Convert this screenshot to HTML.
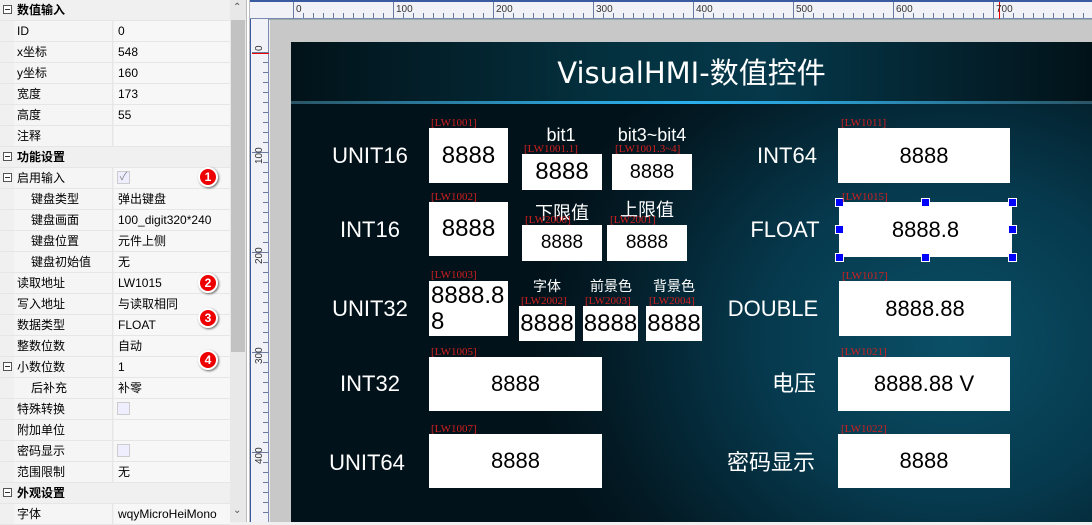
<!DOCTYPE html>
<html><head><meta charset="utf-8"><style>
*{margin:0;padding:0;box-sizing:border-box}
body{width:1092px;height:522px;overflow:hidden;position:relative;background:#f0f0f0;font-family:"Liberation Sans","Noto Sans CJK SC",sans-serif;font-size:12px;color:#000}
.a{position:absolute}
.row{position:absolute;left:0;width:230px;height:21px;border-bottom:1px solid #e6e6e6}
.row .n{position:absolute;left:14px;width:99px;height:20px;line-height:20px;padding-left:3px;background:#f5f5f5;border-right:1px solid #e6e6e6}
.row .v{position:absolute;left:114px;width:116px;height:20px;line-height:20px;padding-left:4px;background:#f7f7f7}
.row.h .n{font-weight:bold;background:#f0f0f0;border:none;width:216px}
.row .i{position:absolute;left:3px;top:5px;width:9px;height:9px;border:1px solid #555;background:#fff}
.row .i:after{content:"";position:absolute;left:1px;top:3px;width:5px;height:1px;background:#333}
.sub{padding-left:17px!important}
.cb{position:absolute;left:3px;top:3px;width:13px;height:13px;border:1px solid #ccc;background:#eef}
.badge{position:absolute;left:198px;width:20px;height:20px;border-radius:50%;background:#e00;border:2px solid #fff;box-shadow:1px 1px 2px #666;color:#fff;font-weight:bold;font-size:12px;text-align:center;line-height:16px}
.box{position:absolute;background:#fff;color:#000;font-size:24px;text-align:center;font-family:"Liberation Sans","Noto Sans CJK SC",sans-serif}
.tag{position:absolute;color:#d02020;font-family:"Liberation Serif",serif;font-size:11px;line-height:11px}
.lbl{position:absolute;color:#fff;font-size:22px;text-align:center;line-height:26px}
.sl{position:absolute;color:#fff;font-size:16px;text-align:center;line-height:18px}
.hd{position:absolute;width:9px;height:9px;background:#00f;border:1px solid #fff}
</style></head><body>
<!-- property grid -->
<div class="row h" style="top:0"><div class="i"></div><div class="n">数值输入</div></div>
<div class="row" style="top:21px"><div class="n">ID</div><div class="v">0</div></div>
<div class="row" style="top:42px"><div class="n">x坐标</div><div class="v">548</div></div>
<div class="row" style="top:63px"><div class="n">y坐标</div><div class="v">160</div></div>
<div class="row" style="top:84px"><div class="n">宽度</div><div class="v">173</div></div>
<div class="row" style="top:105px"><div class="n">高度</div><div class="v">55</div></div>
<div class="row" style="top:126px"><div class="n">注释</div><div class="v"></div></div>
<div class="row h" style="top:147px"><div class="i"></div><div class="n">功能设置</div></div>
<div class="row" style="top:168px"><div class="i"></div><div class="n">启用输入</div><div class="v"><div class="cb" style="color:#888;font-size:11px;line-height:11px;text-align:center">✓</div></div></div>
<div class="row" style="top:189px"><div class="n sub">键盘类型</div><div class="v">弹出键盘</div></div>
<div class="row" style="top:210px"><div class="n sub">键盘画面</div><div class="v">100_digit320*240</div></div>
<div class="row" style="top:231px"><div class="n sub">键盘位置</div><div class="v">元件上侧</div></div>
<div class="row" style="top:252px"><div class="n sub">键盘初始值</div><div class="v">无</div></div>
<div class="row" style="top:273px"><div class="n">读取地址</div><div class="v">LW1015</div></div>
<div class="row" style="top:294px"><div class="n">写入地址</div><div class="v">与读取相同</div></div>
<div class="row" style="top:315px"><div class="n">数据类型</div><div class="v">FLOAT</div></div>
<div class="row" style="top:336px"><div class="n">整数位数</div><div class="v">自动</div></div>
<div class="row" style="top:357px"><div class="i"></div><div class="n">小数位数</div><div class="v">1</div></div>
<div class="row" style="top:378px"><div class="n sub">后补充</div><div class="v">补零</div></div>
<div class="row" style="top:399px"><div class="n">特殊转换</div><div class="v"><div class="cb"></div></div></div>
<div class="row" style="top:420px"><div class="n">附加单位</div><div class="v"></div></div>
<div class="row" style="top:441px"><div class="n">密码显示</div><div class="v"><div class="cb"></div></div></div>
<div class="row" style="top:462px"><div class="n">范围限制</div><div class="v">无</div></div>
<div class="row h" style="top:483px"><div class="i"></div><div class="n">外观设置</div></div>
<div class="row" style="top:504px"><div class="n">字体</div><div class="v">wqyMicroHeiMono</div></div>
<div class="badge" style="top:167px">1</div>
<div class="badge" style="top:273px">2</div>
<div class="badge" style="top:308px">3</div>
<div class="badge" style="top:350px">4</div>
<!-- scrollbar -->
<div class="a" style="left:230px;top:0;width:16px;height:522px;background:#e8e8e8"></div>
<div class="a" style="left:231px;top:20px;width:14px;height:332px;background:#c2c2c2"></div>
<div class="a" style="left:233px;top:2px;font-size:10px;color:#555">⌃</div>
<div class="a" style="left:233px;top:505px;font-size:10px;color:#555">⌄</div>
<div class="a" style="left:246px;top:0;width:4px;height:522px;background:#fff;border-left:1px solid #bbb;border-right:1px solid #bbb"></div>
<!-- rulers -->
<div class="a" style="left:250px;top:0;width:842px;height:19px;background:#f0f2f8;border-top:2px solid #3b5ba0;border-bottom:1px solid #7a8ab0"></div>
<div class="a" style="left:250px;top:19px;width:19px;height:503px;background:#f0f2f8;border-right:1px solid #7a8ab0;border-left:1px solid #3b5ba0"></div>
<svg class="a" style="left:0;top:0" width="1092" height="522">
<g stroke="#6a7aa0" stroke-width="1">
<path d="M293.5 2V19M393.5 2V19M493.5 2V19M593.5 2V19M693.5 2V19M793.5 2V19M893.5 2V19M993.5 2V19"/>
<path d="M303.5 13V18M313.5 13V18M323.5 13V18M333.5 13V18M343.5 13V18M353.5 13V18M363.5 13V18M373.5 13V18M383.5 13V18M403.5 13V18M413.5 13V18M423.5 13V18M433.5 13V18M443.5 13V18M453.5 13V18M463.5 13V18M473.5 13V18M483.5 13V18M503.5 13V18M513.5 13V18M523.5 13V18M533.5 13V18M543.5 13V18M553.5 13V18M563.5 13V18M573.5 13V18M583.5 13V18M603.5 13V18M613.5 13V18M623.5 13V18M633.5 13V18M643.5 13V18M653.5 13V18M663.5 13V18M673.5 13V18M683.5 13V18M703.5 13V18M713.5 13V18M723.5 13V18M733.5 13V18M743.5 13V18M753.5 13V18M763.5 13V18M773.5 13V18M783.5 13V18M803.5 13V18M813.5 13V18M823.5 13V18M833.5 13V18M843.5 13V18M853.5 13V18M863.5 13V18M873.5 13V18M883.5 13V18M903.5 13V18M913.5 13V18M923.5 13V18M933.5 13V18M943.5 13V18M953.5 13V18M963.5 13V18M973.5 13V18M983.5 13V18M1003.5 13V18M1013.5 13V18M1023.5 13V18M1033.5 13V18M1043.5 13V18M1053.5 13V18M1063.5 13V18M1073.5 13V18M1083.5 13V18"/>
<path d="M252 52.5H269M252 152.5H269M252 252.5H269M252 352.5H269M252 452.5H269"/>
<path d="M263 62.5H268M263 72.5H268M263 82.5H268M263 92.5H268M263 102.5H268M263 112.5H268M263 122.5H268M263 132.5H268M263 142.5H268M263 162.5H268M263 172.5H268M263 182.5H268M263 192.5H268M263 202.5H268M263 212.5H268M263 222.5H268M263 232.5H268M263 242.5H268M263 262.5H268M263 272.5H268M263 282.5H268M263 292.5H268M263 302.5H268M263 312.5H268M263 322.5H268M263 332.5H268M263 342.5H268M263 362.5H268M263 372.5H268M263 382.5H268M263 392.5H268M263 402.5H268M263 412.5H268M263 422.5H268M263 432.5H268M263 442.5H268M263 462.5H268M263 472.5H268M263 482.5H268M263 492.5H268M263 502.5H268M263 512.5H268"/>
</g>
<path d="M252 53.5H269M999.5 2V19" stroke="#e00" stroke-width="1"/>
<g font-family="Liberation Sans" font-size="10" fill="#333">
<text x="296" y="12">0</text><text x="396" y="12">100</text><text x="496" y="12">200</text><text x="596" y="12">300</text><text x="696" y="12">400</text><text x="796" y="12">500</text><text x="896" y="12">600</text><text x="996" y="12">700</text>
<text transform="translate(262,51) rotate(-90)">0</text><text transform="translate(262,164) rotate(-90)">100</text><text transform="translate(262,264) rotate(-90)">200</text><text transform="translate(262,364) rotate(-90)">300</text><text transform="translate(262,464) rotate(-90)">400</text>
</g>
</svg>
<!-- canvas -->
<div class="a" style="left:270px;top:20px;width:822px;height:502px;background:#c8c8c8"></div>
<div class="a" style="left:269px;top:19px;width:823px;height:1px;background:#9aa"></div>
<div class="a" style="left:291px;top:42px;width:801px;height:480px;background:radial-gradient(ellipse 420px 360px at 660px 300px,#0a4f66 0%,#06394d 45%,#031a24 85%,#02121a 100%)"></div>
<div class="a" style="left:291px;top:42px;width:801px;height:60px;background:linear-gradient(90deg,#021219 0%,#04313f 40%,#05384a 60%,#021219 100%)"></div>
<div class="a" style="left:291px;top:101px;width:801px;height:3px;background:linear-gradient(90deg,#2a5566 0%,#2a9fd4 35%,#2ab0ee 50%,#2a9fd4 65%,#2a5566 100%)"></div>
<div class="a" style="left:291px;top:55px;width:801px;text-align:center;color:#fff;font-size:29px;line-height:36px;font-family:'DejaVu Sans','Noto Sans CJK SC',sans-serif">VisualHMI-数值控件</div>

<!-- labels -->
<div class="lbl" style="left:310px;top:143px;width:120px">UNIT16</div>
<div class="lbl" style="left:310px;top:217px;width:120px">INT16</div>
<div class="lbl" style="left:310px;top:296px;width:120px">UNIT32</div>
<div class="lbl" style="left:310px;top:371px;width:120px">INT32</div>
<div class="lbl" style="left:307px;top:450px;width:120px">UNIT64</div>
<div class="lbl" style="left:727px;top:143px;width:120px">INT64</div>
<div class="lbl" style="left:725px;top:217px;width:120px">FLOAT</div>
<div class="lbl" style="left:713px;top:296px;width:120px">DOUBLE</div>
<div class="lbl" style="left:734px;top:371px;width:120px">电压</div>
<div class="lbl" style="left:711px;top:450px;width:120px">密码显示</div>
<div class="sl" style="left:521px;top:126px;width:80px;font-size:18px">bit1</div>
<div class="sl" style="left:602px;top:126px;width:100px;font-size:18px">bit3~bit4</div>
<div class="sl" style="left:522px;top:204px;width:80px;font-size:18px">下限值</div>
<div class="sl" style="left:607px;top:201px;width:80px;font-size:18px">上限值</div>
<div class="sl" style="left:517px;top:277px;width:60px;font-size:14px">字体</div>
<div class="sl" style="left:581px;top:277px;width:60px;font-size:14px">前景色</div>
<div class="sl" style="left:644px;top:277px;width:60px;font-size:14px">背景色</div>

<!-- boxes -->
<div class="box" style="left:429px;top:128px;width:79px;height:55px;line-height:55px">8888</div>
<div class="box" style="left:522px;top:154px;width:80px;height:36px;line-height:36px">8888</div>
<div class="box" style="left:612px;top:154px;width:80px;height:36px;line-height:36px;font-size:20px">8888</div>
<div class="box" style="left:429px;top:202px;width:79px;height:54px;line-height:54px">8888</div>
<div class="box" style="left:522px;top:225px;width:80px;height:36px;line-height:36px;font-size:19px">8888</div>
<div class="box" style="left:607px;top:225px;width:80px;height:36px;line-height:36px;font-size:19px">8888</div>
<div class="box" style="left:429px;top:281px;width:79px;height:55px;line-height:26px;text-align:left;padding-left:2px;padding-top:2px">8888.8<br>8</div>
<div class="box" style="left:519px;top:306px;width:56px;height:35px;line-height:35px">8888</div>
<div class="box" style="left:583px;top:306px;width:55px;height:35px;line-height:35px">8888</div>
<div class="box" style="left:646px;top:306px;width:56px;height:35px;line-height:35px">8888</div>
<div class="box" style="left:429px;top:357px;width:173px;height:54px;line-height:54px;font-size:22px">8888</div>
<div class="box" style="left:429px;top:434px;width:173px;height:54px;line-height:54px;font-size:22px">8888</div>
<div class="box" style="left:838px;top:128px;width:172px;height:55px;line-height:55px;font-size:22px">8888</div>
<div class="box" style="left:839px;top:202px;width:173px;height:55px;line-height:55px;font-size:22px">8888.8</div>
<div class="box" style="left:839px;top:281px;width:172px;height:55px;line-height:55px;font-size:22px">8888.88</div>
<div class="box" style="left:838px;top:357px;width:172px;height:54px;line-height:54px;font-size:22px">8888.88 V</div>
<div class="box" style="left:838px;top:434px;width:172px;height:54px;line-height:54px;font-size:22px">8888</div>
<!-- handles -->
<div class="hd" style="left:835px;top:198px"></div><div class="hd" style="left:921px;top:198px"></div><div class="hd" style="left:1008px;top:198px"></div>
<div class="hd" style="left:835px;top:225px"></div><div class="hd" style="left:1008px;top:225px"></div>
<div class="hd" style="left:835px;top:253px"></div><div class="hd" style="left:921px;top:253px"></div><div class="hd" style="left:1008px;top:253px"></div>
<!-- tags -->
<div class="tag" style="left:431px;top:118px">[LW1001]</div>
<div class="tag" style="left:524px;top:144px">[LW1001.1]</div>
<div class="tag" style="left:615px;top:144px">[LW1001.3~4]</div>
<div class="tag" style="left:431px;top:192px">[LW1002]</div>
<div class="tag" style="left:525px;top:215px">[LW2000]</div>
<div class="tag" style="left:610px;top:215px">[LW2001]</div>
<div class="tag" style="left:431px;top:270px">[LW1003]</div>
<div class="tag" style="left:521px;top:296px">[LW2002]</div>
<div class="tag" style="left:585px;top:296px">[LW2003]</div>
<div class="tag" style="left:649px;top:296px">[LW2004]</div>
<div class="tag" style="left:431px;top:347px">[LW1005]</div>
<div class="tag" style="left:431px;top:424px">[LW1007]</div>
<div class="tag" style="left:841px;top:118px">[LW1011]</div>
<div class="tag" style="left:842px;top:192px">[LW1015]</div>
<div class="tag" style="left:842px;top:271px">[LW1017]</div>
<div class="tag" style="left:841px;top:347px">[LW1021]</div>
<div class="tag" style="left:841px;top:424px">[LW1022]</div>
</body></html>
